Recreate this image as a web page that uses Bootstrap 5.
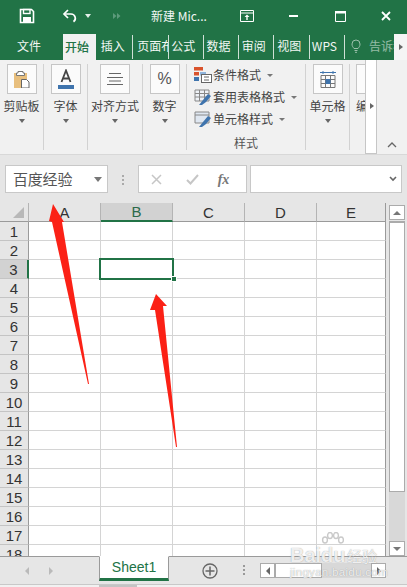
<!DOCTYPE html>
<html lang="zh">
<head>
<meta charset="UTF-8">
<title>新建 Microsoft Excel</title>
<link href="https://cdn.jsdelivr.net/npm/bootstrap@5.3.2/dist/css/bootstrap.min.css" rel="stylesheet">
<style>
html, body { width: 407px; height: 587px; overflow: hidden; }
body { position: relative; background: #e6e6e6; font-family: "Noto Sans CJK SC", "Liberation Sans", sans-serif; font-size: 12px; color: #444; }
.xl-title { height: 32px; background: #217346; color: #fff; padding-left: 19px; }
.xl-title svg { display: block; flex: none; }
.xl-doc { width: 89px; margin-left: 30px; font-size: 12px; line-height: 32px; white-space: nowrap; color: #f2f7f4; }
.xl-tabs { height: 28px; background: #217346; color: #f2f7f4; }
.xl-tab { height: 24px; margin-top: 3px; line-height: 22px; text-align: center; overflow: hidden; white-space: nowrap; flex: none; }
.xl-tab.sep { width: 35.3px; padding-right: 5px; border-right: 1px solid #cfe0d6; }
.xl-tab.clip { padding: 0 0 0 4px; text-align: left; }
.xl-tab.file { width: 63px; padding-right: 5px; }
.xl-tab.on { width: 33px; height: 26px; margin-top: 2px; padding-right: 5px; background: #f1f1f1; color: #217346; font-weight: 500; line-height: 25px; margin-right: 2px; }
.xl-tell { opacity: .55; margin-left: 6px; width: 50px; white-space: nowrap; overflow: hidden; gap: 8px; }
.xl-tabmore { width: 13px; height: 26px; margin-top: 2px; background: #f5f5f5; flex: none; }
.xl-ribbon { height: 95px; background: #f1f1f1; border-bottom: 1px solid #d8d8d8; position: relative; overflow: hidden; }
.xl-group { height: 86px; margin-top: 4px; border-right: 1px solid #d2d2d2; flex: none; text-align: center; white-space: nowrap; }
.xl-box { width: 30px; height: 30px; background: #fbfbfb; border: 1px solid #c6c6c6; margin: 0 auto; }
.xl-glabel { height: 18px; line-height: 18px; margin-top: 3px; color: #444; }
.xl-caret { width: 0; height: 0; margin: 4px auto 0; border: 3px solid transparent; border-top: 4px solid #666; border-bottom: 0; }
.xl-styles { text-align: left; padding-left: 7px; }
.xl-line { height: 22px; gap: 1px; }
.xl-line i { display: block; width: 0; height: 0; margin-left: 5px; border: 3px solid transparent; border-top: 3px solid #777; border-bottom: 0; }
.xl-styname { text-align: center; line-height: 18px; margin-top: 4px; padding-right: 7px; color: #555; }
.xl-slider { position: absolute; left: 365px; top: 0; width: 12px; height: 94px; background: #fff; border: 1px solid #c6c6c6; border-top: 0; }
.xl-slider::after { content: ""; position: absolute; left: 4px; top: 43px; border: 3px solid transparent; border-left: 4px solid #666; border-right: 0; }
.xl-collapse { position: absolute; left: 387px; top: 82px; }
.xl-fbar { height: 48px; padding: 10px 5px 0; }
.xl-name { width: 103px; height: 28px; background: #fff; border: 1px solid #c8c8c8; font-size: 15px; color: #555; padding-left: 7px; letter-spacing: -.2px; }
.xl-down { width: 0; height: 0; margin-left: auto; margin-right: 5px; border: 4px solid transparent; border-top: 5px solid #777; border-bottom: 0; }
.xl-dots { width: 30px; height: 28px; }
.xl-dots span { display: block; width: 2px; height: 2px; background: #aaa; margin: 2px 0 0 14px; }
.xl-fbtns { width: 110px; height: 28px; background: #fff; border: 1px solid #c8c8c8; }
.xl-fx { font-family: "Liberation Serif", serif; font-style: italic; font-weight: 700; font-size: 14px; color: #777; margin-left: 19px; }
.xl-finput { width: 152px; height: 28px; margin-left: 3px; background: #fff; border: 1px solid #c8c8c8; }
.xl-main { height: 353px; }
.xl-sheet { position: relative; width: 386px; height: 353px; overflow: hidden; }
.xl-tbl { border-collapse: separate; border-spacing: 0; table-layout: fixed; width: 386px; font-family: "Liberation Sans", sans-serif; }
.xl-tbl td { height: 19px; padding: 0; background: #fff; border-right: 1px solid #d4d4d4; border-bottom: 1px solid #d4d4d4; }
.xl-tbl td:last-child { border-right-color: #9a9a9a; }
.xl-tbl .rh { background: #e6e6e6; border-right: 1px solid #9a9a9a; border-bottom-color: #c4c4c4; font-size: 15px; line-height: 15px; text-align: center; color: #333; }
.xl-tbl .rh.cur { background: #d2d2d2; border-right: 2px solid #217346; }
.xl-tbl .ch { background: #e6e6e6; border-right: 1px solid #b4b4b4; border-bottom: 1px solid #9a9a9a; font-size: 15px; line-height: 15px; text-align: center; color: #333; }
.xl-tbl .ch.cur { background: #d2d2d2; border-bottom: 2px solid #217346; color: #2c6a4a; }
.xl-tbl .corner { position: relative; }
.xl-corner { position: absolute; right: 4px; bottom: 3px; border-style: solid; border-width: 0 0 11px 11px; border-color: transparent transparent #b8b8b8 transparent; }
.xl-sel { position: absolute; left: 99px; top: 55px; width: 75px; height: 22px; border: 2px solid #217346; }
.xl-handle { position: absolute; left: 70px; top: 16px; background: #217346; border: 1px solid #fff; box-sizing: content-box; width: 4px; height: 4px; }
.xl-vs { width: 16px; margin-left: 3px; }
.xl-sbtn { background: #fff; border: 1px solid #ababab; flex: none; }
.xl-vs .xl-sbtn { height: 15px; }
.xl-vthumb { height: 273px; margin-top: 1px; background: #fff; border: 1px solid #ababab; border-top-width: 2px; }
.xl-vtrack { height: 49px; background: #d8d8d8; }
.xl-tri-u { width: 0; height: 0; border: 4px solid transparent; border-bottom: 4px solid #777; border-top: 0; }
.xl-tri-d { width: 0; height: 0; border: 4px solid transparent; border-top: 4px solid #777; border-bottom: 0; }
.xl-tri-l { width: 0; height: 0; border: 4px solid transparent; border-right: 4px solid #666; border-left: 0; }
.xl-tri-r { width: 0; height: 0; border: 4px solid transparent; border-left: 4px solid #666; border-right: 0; }
.xl-bottom { height: 28px; border-top: 1px solid #9a9a9a; }
.xl-nav { width: 99px; padding-left: 25px; gap: 20px; }
.xl-nav div { opacity: .35; }
.xl-sheettab { width: 70px; height: 25px; margin-top: -1px; background: #fff; border: 1px solid #9a9a9a; border-top-color: #fff; border-bottom: 3px solid #217346; color: #217346; font-family: "Liberation Sans", sans-serif; font-size: 14px; line-height: 21px; text-align: center; }
.xl-add { margin-left: 33px; }
.xl-hdots { width: 2px; margin-left: 25px; }
.xl-hdots span { display: block; width: 2px; height: 2px; background: #999; margin-bottom: 2px; }
.xl-hs { margin-left: 15px; height: 15px; margin-top: 6px; }
.xl-hs .xl-sbtn { width: 15px; height: 15px; }
.xl-hthumb { width: 47px; height: 15px; background: #fff; border: 1px solid #ababab; }
.xl-htrack { width: 49px; height: 15px; background: #d8d8d8; }
.xl-foot { height: 3px; background: #f1f1f1; border-top: 1px solid #c8c8c8; padding-left: 99px; }
.xl-foot div { width: 38px; height: 2px; background: #c4c4c4; }
.xl-arrows { position: absolute; left: 0; top: 0; pointer-events: none; }
.xl-wm { position: absolute; left: 290px; top: 531px; width: 95px; height: 46px; color: rgba(255,255,255,.85); text-shadow: 0 0 1px rgba(120,120,120,.8); font-family: "Liberation Sans", sans-serif; pointer-events: none; }
.xl-wm-a { position: absolute; left: 0; top: 13px; font-size: 20px; font-weight: 700; line-height: 22px; }
.xl-wm-b { position: absolute; left: 57px; top: 15px; font-family: "Noto Sans CJK SC", sans-serif; font-size: 15px; line-height: 20px; }
.xl-wm-c { position: absolute; left: 0; top: 35px; font-size: 11.5px; line-height: 12px; white-space: nowrap; letter-spacing: .3px; }
.xl-wm svg { position: absolute; left: 30px; top: 1px; }
</style>
</head>
<body>

<div class="xl-title d-flex align-items-center">
  <svg width="16" height="16" viewBox="0 0 16 16"><path d="M1.500 1.500h11l2 2v11h-13z" fill="none" stroke="#fff" stroke-width="1.600"/><rect x="4.500" y="1.500" width="6.500" height="4" fill="none" stroke="#fff" stroke-width="1.400"/><rect x="4" y="9" width="8" height="5.500" fill="#fff"/></svg>
  <svg width="16" height="16" viewBox="0 0 16 16" style="margin-left:27px"><path d="M6 2 2 6l4 4" fill="none" stroke="#fff" stroke-width="1.700"/><path d="M2 6h7a4.300 4.300 0 0 1 2.500 7.800" fill="none" stroke="#fff" stroke-width="1.700"/></svg>
  <svg width="6" height="4" viewBox="0 0 6 4" style="margin-left:7px"><path d="M0 0h6L3 4z" fill="#e4efe9"/></svg>
  <svg width="8" height="8" viewBox="0 0 8 8" style="margin-left:22px"><path d="M0 1l3.500 3L0 7zM4 1l3.500 3L4 7z" fill="#5c9a7b"/></svg>
  <div class="xl-doc">新建 Mic...</div>
  <svg width="14" height="12" viewBox="0 0 14 12"><path d="M.5 .5h13v11H.5zM.5 3h13" fill="none" stroke="#fff"/><path d="M7 4.500 4.500 7h1.800v3h1.400V7h1.800z" fill="#fff"/></svg>
  <svg width="9" height="2" viewBox="0 0 9 2" style="margin-left:35px"><rect width="9" height="2" fill="#fff"/></svg>
  <svg width="11" height="11" viewBox="0 0 11 11" style="margin-left:37px"><path d="M.5 .5h10v10H.5z" fill="none" stroke="#fff"/><rect width="11" height="2.500" fill="#fff"/></svg>
  <svg width="10" height="10" viewBox="0 0 10 10" style="margin-left:35px"><path d="M1 1l8 8M9 1 1 9" stroke="#fff" stroke-width="1.800"/></svg>
</div>

<div class="xl-tabs d-flex">
  <div class="xl-tab file">文件</div>
  <div class="xl-tab on">开始</div>
  <div class="xl-tab sep">插入</div>
  <div class="xl-tab sep clip">页面布局</div>
  <div class="xl-tab sep">公式</div>
  <div class="xl-tab sep">数据</div>
  <div class="xl-tab sep">审阅</div>
  <div class="xl-tab sep">视图</div>
  <div class="xl-tab sep">WPS</div>
  <div class="xl-tell d-flex align-items-center">
    <svg width="10" height="14" viewBox="0 0 10 14" class="flex-shrink-0"><path d="M3 9.500C2 8 1 7.300 1 5a4 4 0 0 1 8 0c0 2.300-1 3-2 4.500zM3.500 11.500h3M4 13.300h2" fill="none" stroke="#fff"/></svg>
    <span>告诉我</span>
  </div>
  <div class="xl-tabmore d-flex align-items-center justify-content-center"><div class="xl-tri-r" style="border-width:3px 0 3px 4px"></div></div>
</div>

<div class="xl-ribbon d-flex">
  <div class="xl-group" style="width:44px">
    <div class="xl-box d-flex align-items-center justify-content-center">
      <svg width="16" height="18" viewBox="0 0 16 18"><path d="M0 3h13v15H0z" fill="#e8bf7e"/><path d="M4 3V1.500h5V3h1.500v2.500h-8V3z" fill="#fff" stroke="#777"/><path d="M7.500 9.500h5l2.500 2.500v6H7.500z" fill="#fff" stroke="#666"/></svg>
    </div>
    <div class="xl-glabel">剪贴板</div><div class="xl-caret"></div>
  </div>
  <div class="xl-group" style="width:44px">
    <div class="xl-box d-flex align-items-center justify-content-center">
      <svg width="16" height="20" viewBox="0 0 16 20"><path d="M3.500 13 8 1.500 12.500 13M5 9.500h6" fill="none" stroke="#444" stroke-width="1.800"/><rect y="16" width="16" height="4" fill="#3f74ad"/></svg>
    </div>
    <div class="xl-glabel">字体</div><div class="xl-caret"></div>
  </div>
  <div class="xl-group" style="width:55px">
    <div class="xl-box d-flex align-items-center justify-content-center">
      <svg width="16" height="12" viewBox="0 0 16 12"><path d="M2 .5h12M0 4.500h16M2 8h12M0 11.500h16" stroke="#666"/></svg>
    </div>
    <div class="xl-glabel">对齐方式</div><div class="xl-caret"></div>
  </div>
  <div class="xl-group" style="width:44px">
    <div class="xl-box d-flex align-items-center justify-content-center">
      <span style="font-family:'Liberation Sans',sans-serif;font-size:16px;color:#555">%</span>
    </div>
    <div class="xl-glabel">数字</div><div class="xl-caret"></div>
  </div>
  <div class="xl-group xl-styles" style="width:119px">
    <div class="xl-line d-flex align-items-center">
      <svg width="18" height="16" viewBox="0 0 18 16"><rect width="9" height="3.500" fill="#d9532c"/><rect y="5" width="5" height="3.500" fill="#d9532c"/><rect y="10" width="5" height="4" fill="#3f74ad"/><rect x="6" y="5" width="6" height="3.500" fill="#8fb4dc"/><rect x="7.500" y="7.500" width="10" height="8" fill="#fff" stroke="#666"/><path d="M10 10h5M10 13h5" stroke="#666"/></svg>
      <span>条件格式</span><i></i>
    </div>
    <div class="xl-line d-flex align-items-center">
      <svg width="18" height="16" viewBox="0 0 18 16"><path d="M1 1h14v11H1zM1 4.500h14M1 8h14M5.500 1v11M10.500 1v11" fill="#eef2f7" stroke="#888"/><path d="M5 16l4-5 5-6 3 2-5 6-4 3z" fill="#3f74ad"/></svg>
      <span>套用表格格式</span><i></i>
    </div>
    <div class="xl-line d-flex align-items-center">
      <svg width="18" height="16" viewBox="0 0 18 16"><path d="M1 1h14v11H1z" fill="#dfe7f1" stroke="#888"/><path d="M1 4h14" stroke="#888"/><path d="M5 16l4-5 5-6 3 2-5 6-4 3z" fill="#3f74ad"/></svg>
      <span>单元格样式</span><i></i>
    </div>
    <div class="xl-styname">样式</div>
  </div>
  <div class="xl-group" style="width:44px">
    <div class="xl-box d-flex align-items-center justify-content-center">
      <svg width="16" height="17" viewBox="0 0 16 17"><path d="M0 1.500h16M3 0v3M13 0v3" stroke="#3f74ad"/><path d="M1 4.500h14v12H1zM1 8.500h14M1 12.500h14M5.500 4.500v12M10.500 4.500v12" fill="none" stroke="#777"/><rect x="5.500" y="8" width="5" height="5" fill="#3f74ad"/></svg>
    </div>
    <div class="xl-glabel">单元格</div><div class="xl-caret"></div>
  </div>
  <div class="xl-group overflow-hidden border-0" style="width:16px;padding-left:6px">
    <div class="xl-box" style="margin:0"></div>
    <div class="xl-glabel text-start">编辑</div>
  </div>
  <div class="xl-slider"></div>
  <svg class="xl-collapse" width="10" height="6" viewBox="0 0 10 6"><path d="M1 5l4-4 4 4" fill="none" stroke="#666" stroke-width="1.300"/></svg>
</div>

<div class="xl-fbar d-flex">
  <div class="xl-name d-flex align-items-center">百度经验<div class="xl-down"></div></div>
  <div class="xl-dots d-flex flex-column justify-content-center"><span></span><span></span><span></span></div>
  <div class="xl-fbtns d-flex align-items-center">
    <svg width="11" height="11" viewBox="0 0 11 11" style="margin-left:12px"><path d="M1 1l9 9M10 1l-9 9" stroke="#c6c6c6" stroke-width="1.500"/></svg>
    <svg width="13" height="11" viewBox="0 0 13 11" style="margin-left:24px"><path d="M1 6l3.500 3.500L12 1" fill="none" stroke="#c6c6c6" stroke-width="2"/></svg>
    <span class="xl-fx">fx</span>
  </div>
  <div class="xl-finput d-flex align-items-center justify-content-end pe-1">
    <svg width="8" height="6" viewBox="0 0 8 6"><path d="M1 1l3 3 3-3" fill="none" stroke="#666" stroke-width="1.600"/></svg>
  </div>
</div>

<div class="xl-main d-flex">
  <div class="xl-sheet">
    <table class="xl-tbl">
      <colgroup><col style="width:29px"><col style="width:72px"><col style="width:72px"><col style="width:72px"><col style="width:72px"><col style="width:69px"></colgroup>
      <tbody id="xlRows"></tbody>
    </table>
    <div class="xl-sel"><div class="xl-handle"></div></div>
  </div>
  <div class="xl-vs d-flex flex-column">
    <div class="xl-sbtn d-flex align-items-center justify-content-center" style="margin-top:2px"><div class="xl-tri-u"></div></div>
    <div class="xl-vthumb"></div>
    <div class="xl-vtrack"></div>
    <div class="xl-sbtn d-flex align-items-center justify-content-center"><div class="xl-tri-d"></div></div>
  </div>
</div>

<div class="xl-bottom d-flex">
  <div class="xl-nav d-flex align-items-center"><div class="xl-tri-l"></div><div class="xl-tri-r"></div></div>
  <div class="xl-sheettab">Sheet1</div>
  <svg class="xl-add align-self-center" width="16" height="16" viewBox="0 0 16 16"><circle cx="8" cy="8" r="7" fill="none" stroke="#666" stroke-width="1.300"/><path d="M8 3.500v9M3.500 8h9" stroke="#666" stroke-width="1.500"/></svg>
  <div class="xl-hdots align-self-center"><span></span><span></span><span></span></div>
  <div class="xl-hs d-flex">
    <div class="xl-sbtn d-flex align-items-center justify-content-center"><div class="xl-tri-l"></div></div>
    <div class="xl-hthumb"></div>
    <div class="xl-htrack"></div>
    <div class="xl-sbtn d-flex align-items-center justify-content-center"><div class="xl-tri-r"></div></div>
  </div>
</div>
<div class="xl-foot"><div></div></div>

<svg class="xl-arrows" width="407" height="587" viewBox="0 0 407 587">
  <polygon points="53,204 64,222 62,222 89,384 88,384 52,222 49,221" fill="#fb2116"/>
  <polygon points="156,294 167,306 163,306 177,447 176,447 155,310 150,310" fill="#fb2116"/>
</svg>

<div class="xl-wm">
  <svg width="24" height="18" viewBox="0 0 24 18"><g fill="none" stroke="#bbb" stroke-opacity=".8" stroke-width="1.400"><ellipse cx="5" cy="8" rx="2.400" ry="3"/><ellipse cx="10" cy="3.500" rx="2.400" ry="3"/><ellipse cx="16" cy="3.500" rx="2.400" ry="3"/><ellipse cx="21" cy="8" rx="2.400" ry="3"/></g></svg>
  <div class="xl-wm-a">Baidu</div>
  <div class="xl-wm-b">经验</div>
  <div class="xl-wm-c">jingyan.baidu.com</div>
</div>

<script>
  // build the sheet rows
  const rows = document.getElementById('xlRows');
  let html = '<tr><td class="ch corner"><div class="xl-corner"></div></td>';
  ['A', 'B', 'C', 'D', 'E'].forEach(c => {
    html += `<td class="ch${c === 'B' ? ' cur' : ''}">${c}</td>`;
  });
  html += '</tr>';
  for (let r = 1; r <= 18; r++) {
    html += `<tr><td class="rh${r === 3 ? ' cur' : ''}">${r}</td><td></td><td></td><td></td><td></td><td></td></tr>`;
  }
  rows.innerHTML = html;
</script>
<script src="https://cdn.jsdelivr.net/npm/bootstrap@5.3.2/dist/js/bootstrap.bundle.min.js"></script>
</body>
</html>
